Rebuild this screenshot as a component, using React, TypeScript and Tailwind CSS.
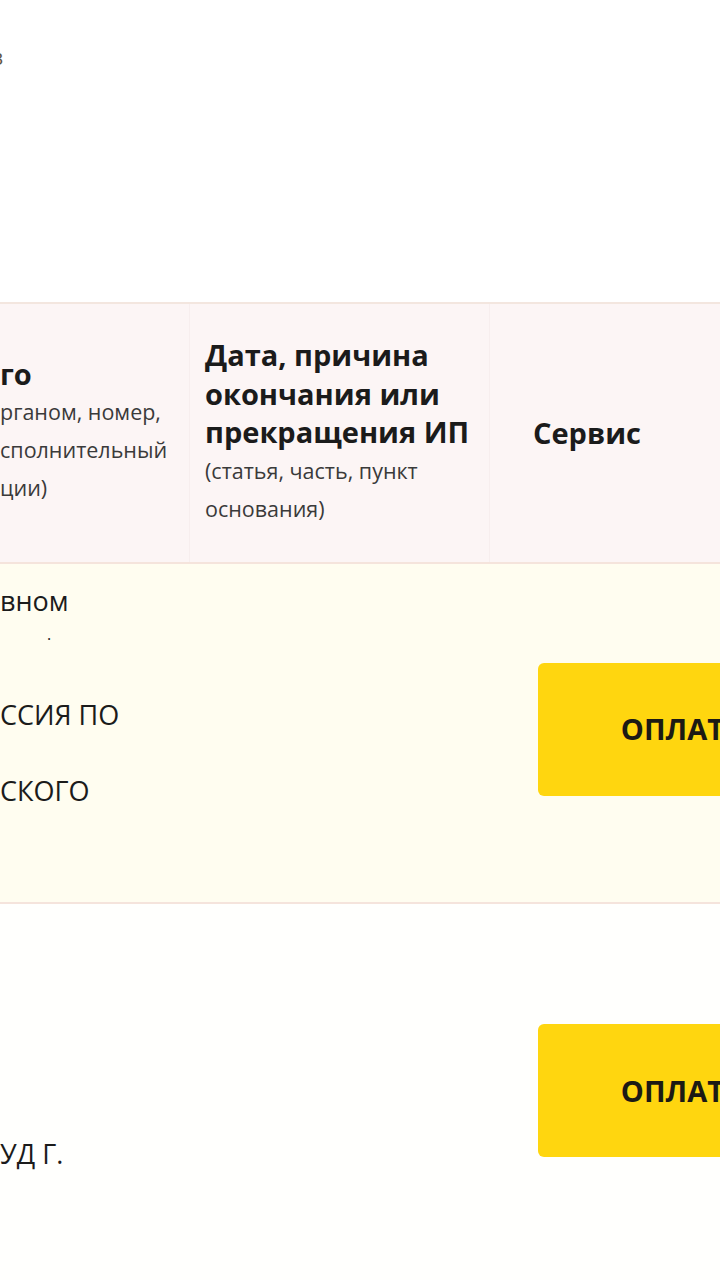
const FONT = "font-['Open_Sans','Noto_Sans',sans-serif]";

function PayButton() {
  return (
    <button className="flex h-[133px] w-[328px] shrink-0 items-center justify-center rounded-md bg-[#ffd60f] text-[29px] font-bold text-[#1c1a14]">
      ОПЛАТИТЬ
    </button>
  );
}

export default function App() {
  return (
    <div className={`${FONT} h-[1280px] w-[720px] overflow-hidden bg-white text-[#1b1b1b]`}>
      {/* Clipped caption above the table */}
      <div className="h-[302px] pt-[42px]">
        <span className="-ml-[7px] text-[21px] text-[#5e5646]">з</span>
      </div>

      <div className="w-[1100px] border-t-2 border-[#f3e6df]">
        {/* Header */}
        <div className="flex h-[258px] bg-[#fcf5f5]">
          <div className="flex w-[190px] shrink-0 flex-col justify-center border-r border-[#f7eeee] pb-[4px]">
            <div className="text-[29px] font-bold leading-[38px]">го</div>
            <div className="whitespace-nowrap text-[21.5px] leading-[38px] text-[#3a3a3a]">
              рганом, номер,
              <br />
              сполнительный
              <br />
              ции)
            </div>
          </div>
          <div className="flex w-[300px] shrink-0 flex-col justify-center border-r border-[#f7eeee] pl-[15px] pb-[2px]">
            <div className="whitespace-nowrap text-[29px] font-bold leading-[38.5px]">
              Дата, причина
              <br />
              окончания или
              <br />
              прекращения ИП
            </div>
            <div className="whitespace-nowrap text-[21.5px] leading-[38px] text-[#3a3a3a]">
              (статья, часть, пункт
              <br />
              основания)
            </div>
          </div>
          <div className="flex items-center pl-[43px] text-[29px] font-bold">Сервис</div>
        </div>

        {/* Row 1 */}
        <div className="flex h-[342px] border-t-2 border-b-2 border-[#f5e4dc] bg-[#fffdf0]">
          <div className="w-[190px] shrink-0 whitespace-nowrap pt-[18px] text-[27px] leading-[38px]">
            <div>вном</div>
            <div className="pl-[47px] text-[16px]">·</div>
            <div>&nbsp;</div>
            <div>ССИЯ ПО</div>
            <div>&nbsp;</div>
            <div>СКОГО</div>
          </div>
          <div className="w-[348px] shrink-0" />
          <div className="flex items-center pb-[8px]">
            <PayButton />
          </div>
        </div>

        {/* Row 2 */}
        <div className="flex h-[380px] bg-[#fffffd]">
          <div className="flex w-[190px] shrink-0 items-end whitespace-nowrap pb-[111px] text-[27px] leading-[38px]">
            <div>УД Г.</div>
          </div>
          <div className="w-[348px] shrink-0" />
          <div className="flex items-start pt-[120px]">
            <PayButton />
          </div>
        </div>
      </div>
    </div>
  );
}
